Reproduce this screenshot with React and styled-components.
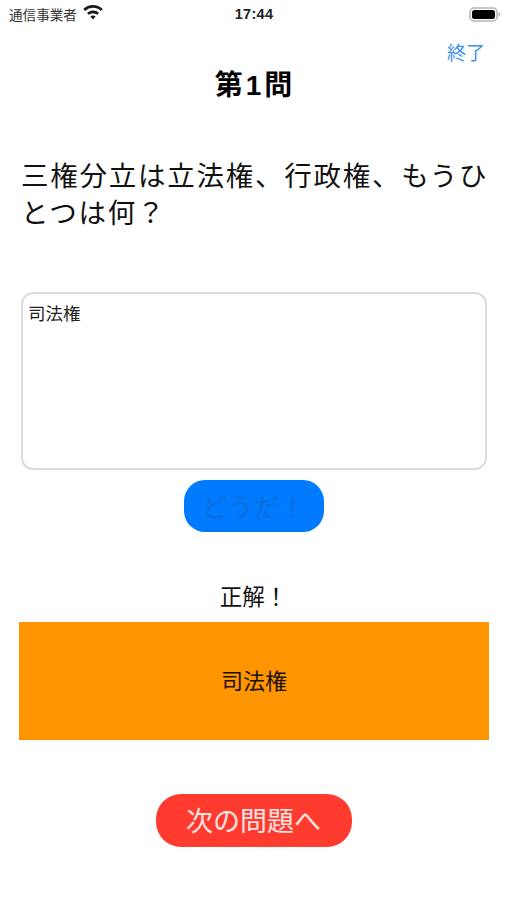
import React from 'react';
import styled, { createGlobalStyle } from 'styled-components';

const FONT = `"Liberation Sans", "Noto Sans CJK JP", sans-serif`;

const GlobalStyle = createGlobalStyle`
  html, body {
    margin: 0;
    padding: 0;
    background: #fff;
    font-family: ${FONT};
  }
  * { box-sizing: border-box; }
`;

const Page = styled.div`
  width: 507px;
  height: 900px;
  overflow: hidden;
  background: #fff;
  color: #000;
  display: flex;
  flex-direction: column;
`;

const StatusBar = styled.div`
  height: 28px;
  padding: 0 6px 0 9px;
  display: grid;
  grid-template-columns: 1fr auto 1fr;
  align-items: center;
`;

const Carrier = styled.div`
  display: flex;
  align-items: center;
  gap: 6px;
  font-size: 13.6px;
  color: #333;
  svg { margin-bottom: 3px; }
`;

const Clock = styled.div`
  font-size: 14.5px;
  font-weight: 700;
  color: #222;
  letter-spacing: 0.3px;
  margin-right: 2px;
`;

const BatteryWrap = styled.div`
  justify-self: end;
  display: flex;
`;

const Nav = styled.div`
  display: flex;
  justify-content: flex-end;
  padding-right: 22px;
  margin-top: 13px;
`;

const EndLink = styled.a`
  font-size: 19px;
  line-height: 26px;
  color: #3d8fe8;
`;

const Title = styled.h1`
  margin: 0;
  padding-left: 3px;
  font-size: 28px;
  line-height: 38px;
  font-weight: 700;
  letter-spacing: 3px;
  text-align: center;
  color: #000;
`;

const Question = styled.p`
  margin: 53px 0 0;
  padding: 0 14px 0 21px;
  font-size: 27.5px;
  line-height: 37px;
  letter-spacing: 1.75px;
  color: #111;
`;

const AnswerBox = styled.div`
  margin: 60px 20px 0 21px;
  height: 178px;
  padding: 7px 5px;
  border: 2px solid #dcdcdc;
  border-radius: 12px;
  font-size: 17.5px;
  line-height: 26px;
  color: #222;
`;

const CheckButton = styled.button`
  display: block;
  align-self: center;
  margin: 10px 0 0 0;
  width: 140px;
  height: 52px;
  padding: 0 0 1px;
  border: 0;
  border-radius: 21px;
  background: #007aff;
  color: #0a6ed8;
  font-family: ${FONT};
  font-size: 26px;
`;

const Verdict = styled.div`
  margin-top: 49px;
  text-align: center;
  font-size: 22.5px;
  line-height: 34px;
  color: #111;
`;

const AnswerBanner = styled.div`
  margin: 7px 18px 0 19px;
  height: 118px;
  padding-bottom: 4px;
  background: #ff9500;
  display: flex;
  align-items: center;
  justify-content: center;
  font-size: 22px;
  color: #1a1000;
`;

const NextButton = styled.button`
  display: block;
  align-self: center;
  margin: 54px 0 0 0;
  width: 196px;
  height: 53px;
  padding: 0 0 2px;
  border: 0;
  border-radius: 25px;
  background: #ff3b30;
  color: #ffe4e2;
  font-family: ${FONT};
  font-size: 27px;
`;

const WifiIcon = () => (
  <svg width="20" height="15" viewBox="0 0 20 15" fill="#1a1a1a">
    <path d="M10 0C6.200 0 2.800 1.500.3 3.900l1.900 2A11.200 11.200 0 0 1 10 2.800c3 0 5.800 1.200 7.800 3.100l1.900-2A14 14 0 0 0 10 0z" />
    <path d="M10 5.400c-2.300 0-4.400.9-6 2.400l1.900 2a5.900 5.900 0 0 1 8.200 0l1.900-2a8.700 8.700 0 0 0-6-2.400z" />
    <path d="M10 10.600c-1 0-1.900.4-2.600 1L10 14.400l2.600-2.800c-.7-.6-1.600-1-2.600-1z" />
  </svg>
);

const BatteryIcon = () => (
  <svg width="32" height="15" viewBox="0 0 32 15">
    <rect x="1" y="1" width="27" height="13" rx="4" fill="#fff" stroke="#b5b5b5" strokeWidth="1.500" />
    <rect x="3" y="3" width="23" height="9" rx="2.500" fill="#000" />
    <path d="M29.500 5v5c1-.3 1.800-1.300 1.800-2.500S30.500 5.300 29.500 5z" fill="#b5b5b5" />
  </svg>
);

export default function App() {
  return (
    <Page>
      <GlobalStyle />
      <StatusBar>
        <Carrier>
          通信事業者
          <WifiIcon />
        </Carrier>
        <Clock>17:44</Clock>
        <BatteryWrap>
          <BatteryIcon />
        </BatteryWrap>
      </StatusBar>
      <Nav>
        <EndLink>終了</EndLink>
      </Nav>
      <Title>第1問</Title>
      <Question>三権分立は立法権、行政権、もうひとつは何？</Question>
      <AnswerBox>司法権</AnswerBox>
      <CheckButton>どうだ！</CheckButton>
      <Verdict>正解！</Verdict>
      <AnswerBanner>司法権</AnswerBanner>
      <NextButton>次の問題へ</NextButton>
    </Page>
  );
}
